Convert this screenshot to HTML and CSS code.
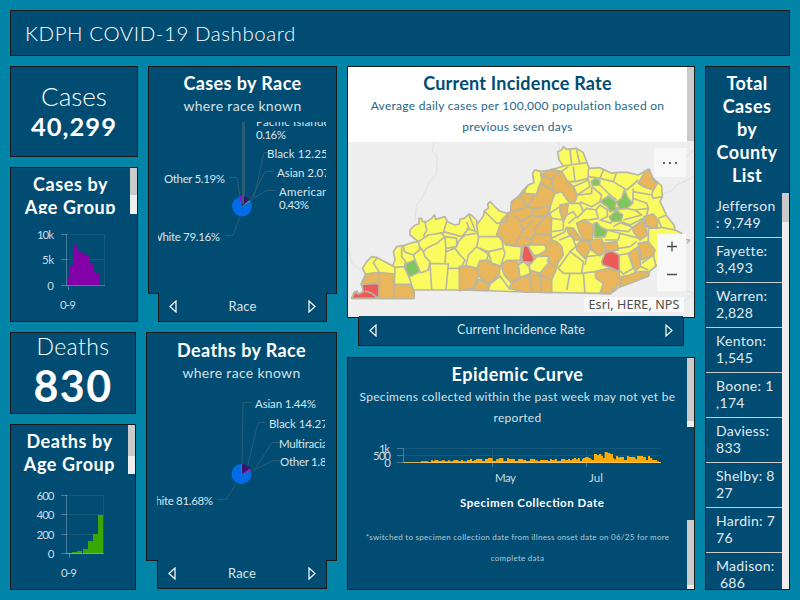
FILE: index.html
```html
<!DOCTYPE html>
<html lang="en">
<head>
<meta charset="utf-8">
<title>KDPH COVID-19 Dashboard</title>
<link rel="stylesheet" href="styles.css">
</head>
<body>
<header class="panel topbar"><h1>KDPH COVID-19 Dashboard</h1></header>
<main>
  <div class="left">
    <div class="row row-cases">
      <div class="stack stack-cases">
        <section class="panel kpi kpi-cases"><div class="kpi-label">Cases</div><div class="kpi-value">40,299</div></section>
        <section class="panel age">
          <div class="age-head short"><h2>Cases by<br>Age Group</h2><div class="bar"><i class="thumb27"></i></div></div>
          <svg class="age-chart" width="126" height="107" viewBox="11 214 126 107">
            <path class="grid" d="M67 234.500h38M67 259.500h38M104.500 234v52"/>
            <path class="bars-purple" d="M67 286v-9h3v-11h4v-21h4v7h3v2h4v2h4v7h4v9h3v2h4v12z"/>
            <path class="axis" d="M61 234.500h6M61 259.500h6M61 285.500h44M66.500 234v52M68.500 286v4"/>
            <g class="tick end"><text x="54" y="239" textLength="17">10k</text><text x="54" y="264" textLength="12">5k</text><text x="54" y="290">0</text></g>
            <text class="tick" x="60" y="309" textLength="16">0-9</text>
          </svg>
        </section>
      </div>
      <div class="race">
        <section class="panel race-main">
          <h2>Cases by Race</h2><p>where race known</p>
          <svg class="pie" width="168" height="168" viewBox="158 122 168 168">
            <path class="leader thick" d="M243.500 122v78"/>
            <path class="leader" d="M229 177.500h8l3 20M271 152.500h-7l-10 45M274 171.500h-9l-14 28M276 190.500h-10l-15 10M225 235.500h8l7-19"/>
            <circle cx="242" cy="206.500" r="10" fill="#006ce6"/>
            <path fill="#a000e6" d="M242 206l-3-9.600a10 10 0 0 1 3-.4z"/><path fill="#38146e" d="M242 206v-10a10 10 0 0 1 7.500 4z"/><path fill="#4ca820" d="M242 206.500l7.500-6.500 1 1.500z"/><path class="leader thick" d="M242.500 196v8"/>
            <g class="pietext"><text x="256" y="126" textLength="78">Pacific Islander</text><text x="256" y="139" textLength="30">0.16%</text><text x="267" y="158" textLength="70">Black 12.25%</text><text x="277" y="177" textLength="62">Asian 2.07%</text><text x="279" y="196" textLength="85">American Indian</text><text x="279" y="209" textLength="30">0.43%</text><text x="164" y="183" textLength="61">Other 5.19%</text><text x="151" y="241" textLength="69">White 79.16%</text></g>
          </svg>
        </section>
        <nav class="panel tab tab-race"><svg width="8" height="13" viewBox="0 0 8 13"><path d="M7 1v11L1 6.500z"/></svg><span>Race</span><svg width="8" height="13" viewBox="0 0 8 13"><path d="M1 1v11l6-5.500z"/></svg></nav>
      </div>
    </div>
    <div class="row row-deaths">
      <div class="stack stack-deaths">
        <section class="panel kpi kpi-deaths"><div class="kpi-label">Deaths</div><div class="kpi-value">830</div></section>
        <section class="panel age">
          <div class="age-head tall"><h2>Deaths by<br>Age Group</h2><div class="bar"><i class="thumb31"></i></div></div>
          <svg class="age-chart" width="124" height="115" viewBox="11 474 124 115">
            <path class="grid" d="M67 495.500h37M67 514.500h37M67 534.500h37M103.500 495v59"/>
            <path class="bars-green" d="M67 554v-1h5v-1h5v-1h5v3h1v-5h5v-8h5v-7h5v-19h5v39z"/>
            <path class="axis" d="M61 495.500h6M61 514.500h6M61 534.500h6M61 553.500h43M66.500 495v59M69.500 554v4"/>
            <g class="tick end"><text x="54.500" y="500" textLength="18">600</text><text x="54.500" y="519" textLength="18">400</text><text x="54.500" y="539" textLength="18">200</text><text x="54.500" y="558">0</text></g>
            <text class="tick" x="61" y="577" textLength="16">0-9</text>
          </svg>
        </section>
      </div>
      <div class="race">
        <section class="panel race-main">
          <h2>Deaths by Race</h2><p>where race known</p>
          <svg class="pie" width="168" height="170" viewBox="157 388 168 170">
            <path class="leader" d="M252 402.500h-9l-1 64M266 422.500h-8l-11 46M281 442.500h-9l-18 28M282 460.500h-9l-20 10M217 499.500h9l11-17"/>
            <circle cx="241.500" cy="474" r="10" fill="#006ce6"/>
            <path fill="#38146e" d="M242 474v-10a10 10 0 0 1 8 4.500z"/><path fill="#a52090" d="M242 474l8-5.500 1 2z"/><path stroke="#268b85" d="M241.500 464v9"/>
            <g class="pietext"><text x="255" y="408" textLength="61">Asian 1.44%</text><text x="269" y="428" textLength="68">Black 14.27%</text><text x="279" y="448" textLength="84">Multiracial 0.81%</text><text x="280" y="466" textLength="62">Other 1.80%</text><text x="144" y="505" textLength="69">White 81.68%</text></g>
          </svg>
        </section>
        <nav class="panel tab tab-race"><svg width="8" height="13" viewBox="0 0 8 13"><path d="M7 1v11L1 6.500z"/></svg><span>Race</span><svg width="8" height="13" viewBox="0 0 8 13"><path d="M1 1v11l6-5.500z"/></svg></nav>
      </div>
    </div>
  </div>
  <div class="center">
    <section class="panel mapbox">
      <div class="map-head"><div class="map-title"><h2>Current Incidence Rate</h2><p>Average daily cases per 100,000 population based on<br>previous seven days</p></div><div class="bar"><i class="thumb74"></i></div></div>
      <div class="map">
        <svg width="346" height="175" viewBox="9 6 1038 525">
          <g fill="none" stroke="#dfdfdf" stroke-width="3"><path d="M268 6l-6 25 15 20-2 50-25 30-20 45-16 20-4 48M9 320l12 50 25 20M640 6l5 25M1047 110l-52 25-12 15-35 15M1015 60l32-30M985 440l62 20M1000 500l47-40"/></g>
          <path class="y" d="M20 475L27 458 36 453 40 462 60 453 48 433 55 418 62 402 52 385 65 365 80 350 97 353 120 365 143 378 150 360 145 335 155 320 175 317 200 308 220 305 195 285 195 270 210 255 222 252 222 235 230 235 232 245 245 245 260 235 268 225 272 238 300 230 307 245 330 255 343 252 345 237 358 235 372 222 382 228 395 240 395 255 415 228 418 212 430 205 428 192 436 185 445 195 462 212 485 220 497 215 500 185 520 170 535 150 550 135 567 128 563 100 570 90 587 95 615 90 635 85 655 78 642 60 638 35 650 30 655 20 665 28 695 25 715 38 725 65 733 85 765 83 800 100 815 97 845 97 880 105 910 88 925 115 950 138 952 170 945 185 955 205 965 228 987 255 990 270 1010 280 965 350 933 378 913 395 910 408 855 430 825 440 795 462 765 460 540 456 345 450 208 450 207 475z"/>
          <path class="line" d="M1022 298L1034 300 1026 310"/>
          <g class="o"><path d="M62 402L103 398 103 430 52 432zM103 398L148 402 146 475 103 475zM148 432L195 433 205 450 207 475 146 475zM343 380L370 378 395 385 400 405 385 445 343 452zM398 380L405 362 430 360 440 370 465 378 463 402 435 430 412 418 398 405zM400 418L430 430 430 450 385 450zM468 375L485 362 518 365 525 410 500 430 478 405z"/>
          <path d="M455 285L470 240 490 220 497 215 500 185 520 170 537 155 575 165 580 145 590 130 585 105 620 88 650 95 665 120 685 140 697 165 690 185 675 190 660 170 650 155 630 160 620 185 612 215 620 235 618 280 620 300 635 305 650 320 655 345 640 365 635 385 620 420 620 458 540 456 492 445 500 430 525 415 525 370 530 320 480 312 463 292z"/></g>
          <path class="r" d="M50 433L102 430 102 472 85 475 20 475 30 455 40 462 55 455z"/>
          <path class="g" d="M185 370L210 360 225 395 192 410 180 385z"/>
          <path class="line" d="M60 453L80 460 98 472M97 353L85 368 103 398M62 402L103 398M143 378L150 382 148 432M143 378L150 382 178 380 182 365 170 350 170 322M175 317L178 335 205 345 225 328 220 305M205 345L210 360M178 380L192 410 205 450M225 320L235 335 240 350 255 365 250 390 225 400M235 290L245 270 240 245M220 305L250 285 295 278 305 245M235 335L245 325 275 310 300 290 290 280M255 370L260 450M250 390L255 370 310 372 303 450M300 290L303 330 300 370M310 385L343 385M295 275L350 290 372 265 365 245M365 265L395 275M372 225L390 270M303 290L335 295 335 320 303 325M303 335L330 325 345 345 360 360 350 380M335 320L340 305 360 285 395 280M395 255L400 290 400 300 395 320 370 345 362 380M395 320L420 335 430 345 425 360M400 290L470 290 475 325 430 335 405 325M420 215L445 240 455 250 485 245 490 220M430 335L440 370 465 378M475 325L480 340 468 375M480 315L530 320 530 360 485 362M430 450L435 432 465 408 492 445"/>
          <g transform="translate(525 0)">
            <path class="y" d="M15 150L25 135 42 128 38 100 45 90 62 95 65 120 55 145 50 163 15 160zM22 315L75 315 80 330 55 345 40 345zM28 375L50 350 85 348 85 370 60 400 30 390zM-5 375L10 365 28 380 30 400 0 415z"/>
            <path class="o" d="M120 195L145 190 140 225 130 245 120 215zM140 262L160 265 185 300 165 300 145 280zM170 250L190 240 220 255 220 280 215 300 190 300 178 275zM170 315L185 300 208 305 210 330 195 355 170 330zM208 300L245 297 258 330 240 348 215 330zM250 310L290 305 295 330 258 335zM225 395L265 385 298 395 300 430 270 460 240 460 250 430 228 415zM305 410L330 405 350 395 388 395 385 408 330 430 300 440zM325 340L355 320 362 380 345 392 335 365zM355 310L385 305 405 330 400 345 365 360zM338 262L370 240 382 285 360 300 340 275zM372 230L400 222 415 240 410 265 380 260zM355 130L375 95 388 88 398 118 412 130 400 150 370 140z"/>
            <path class="line" d="M0 165L20 200 45 165M-25 215L10 205 20 200M20 200L40 205 90 200M40 205L35 225 0 245-15 225M35 225L50 230 80 225 90 205M80 225L45 265 45 280 95 285M0 250L10 270-15 310M10 270L40 240M35 300L45 280M10 290L35 300 30 315M62 130L105 155M95 120L100 155M60 105L95 118 120 95M85 315L95 300M80 360L110 385M60 400L65 458M30 400L35 458M0 410L60 405 95 420"/>
            <path class="line" d="M150 28L155 75M170 30L180 75M128 78L150 75 200 68M125 95L145 80M160 80L165 125M140 125L165 125 205 115 205 90 208 85M160 140L205 120 210 140 172 165M205 110L240 115 250 90M240 115L280 125 290 97M280 125L320 150 355 120M240 135L270 165 290 180M215 140L245 165 240 185M175 165L215 160 215 140M180 185L215 200 240 185M340 145L338 190M340 155L395 165 400 150M395 165L400 175 427 170M338 175L380 190 385 205 345 210M385 205L380 225M310 240L365 225 345 210 320 205M305 245L330 255 370 235M415 235L440 225M415 240L425 262 465 270M385 305L385 265 430 262M280 260L300 248 338 262 325 275 285 270 262 270M262 270L300 280 295 300 255 300M300 280L360 295M295 325L330 320 350 305M95 235L130 240 130 270 95 275M95 295L135 275 140 262M80 225L120 200M145 250L170 230 160 215 140 225M150 190L180 190 190 215 170 235M190 215L200 205 228 210 235 235 205 240 190 240M228 210L240 195 262 210 262 230 240 240 275 250M115 385L150 335 190 365 185 400M118 300L155 285 168 320 150 335M115 385L130 400 150 400 190 400 195 458M150 400L140 450M185 400L225 395M195 375L200 350 240 345M298 345L325 340 340 385 310 402 298 390M365 370L400 345 408 378M362 380L385 390"/>
            <path class="g" d="M213 125L225 115 240 122 238 135 218 137zM240 185L265 168 288 185 285 200 295 208 270 215 262 200zM290 185L305 175 313 150 325 175 338 190 320 205 298 208zM268 230L290 212 308 225 303 243 275 245zM222 250L232 248 240 260 262 270 255 290 225 292z"/>
            <path class="r" d="M5 350L12 315 25 320 43 358 35 368 8 365zM245 365L255 340 275 333 298 345 298 395 270 382 248 375z"/>
          </g>
        </svg>
        <div class="map-menu"><i></i><i></i><i></i></div>
        <div class="map-zoom"><svg width="30" height="58" viewBox="0 0 30 58"><path d="M10 12.500h10M15 7.500v10M10 40.500h10"/></svg></div>
        <div class="credit">Esri, HERE, NPS</div>
      </div>
    </section>
    <nav class="panel tab tab-map"><svg width="8" height="13" viewBox="0 0 8 13"><path d="M7 1v11L1 6.500z"/></svg><span>Current Incidence Rate</span><svg width="8" height="13" viewBox="0 0 8 13"><path d="M1 1v11l6-5.500z"/></svg></nav>
    <section class="panel epi">
      <div class="epi-head"><div class="epi-title"><h2>Epidemic Curve</h2><p>Specimens collected within the past week may not yet be<br>reported</p></div><div class="bar"><i class="thumb64"></i></div></div>
      <svg class="epi-chart" width="346" height="93" viewBox="348 427 346 93">
        <path class="grid" d="M403 448.500h258M403 455.500h258M492.500 448v14M586.500 448v14"/>
        <path fill="#ffaa00" transform="translate(345 430) scale(.33333)" d="M175 99V97H228V94H250V96H258V91H264V93H268V90H280V93H290V91H300V94H309V91H315V94H325V90H340V94H348V90H354V94H366V90H375V87H381V93H387V90H393V87H412V93H420V87H429V84H443V93H453V88H462V84H475V93H486V84H492V87H510V93H519V87H534V90H543V93H555V87H570V91H578V94H585V90H609V93H615V87H621V90H630V87H636V93H648V87H660V90H669V87H675V91H681V87H687V84H693V88H699V84H705V93H711V87H714V84H721V81H731V84H737V88H741V90H747V72H756V75H762V72H769V78H774V84H779V66H788V69H796V72H804V84H808V88H813V78H819V82H825V81H837V90H846V78H852V81H871V87H876V78H894V81H903V90H909V78H915V84H922V90H936V94H942V96H948V99z"/>
        <path class="axis" d="M397 448.500h6M397 455.500h6M403.500 448v14M397 462.500h264M492.500 463v4M586.500 463v4"/>
        <g class="tick end"><text x="390" y="453" textLength="11">1k</text><text x="391" y="460" textLength="18">500</text><text x="391" y="467">0</text></g>
        <g class="tick"><text x="495" y="482" textLength="21">May</text><text x="589" y="482" textLength="14">Jul</text></g>
        <text class="axis-title" x="460" y="507" textLength="144">Specimen Collection Date</text>
      </svg>
      <div class="epi-foot"><p>*switched to specimen collection date from illness onset date on 06/25 for more<br>complete data</p><div class="bar"><i class="thumb65"></i></div></div>
    </section>
  </div>
  <aside class="panel counties">
    <h2>Total<br>Cases<br>by<br>County<br>List</h2>
    <div class="county-body">
      <ul><li>Jefferson<br>: 9,749</li><li>Fayette:<br>3,493</li><li>Warren:<br>2,828</li><li>Kenton:<br>1,545</li><li>Boone: 1<br>,174</li><li>Daviess:<br>833</li><li>Shelby: 8<br>27</li><li>Hardin: 7<br>76</li><li>Madison:<br>&nbsp;686</li></ul>
      <div class="bar"><i class="thumb29"></i></div>
    </div>
  </aside>
</main>
</body>
</html>
```
FILE: styles.css
```css
* { box-sizing: border-box; }
body {
  margin: 0;
  width: 800px;
  height: 600px;
  padding: 10px;
  overflow: hidden;
  background: #0084a8;
  color: #fff;
  font-family: Lato, "Open Sans", sans-serif;
}
h1, h2, p, ul { margin: 0; padding: 0; font-weight: 400; }
svg { display: block; }
.panel { background: #004c73; border: 1px solid #1a1a1a; overflow: hidden; }
.topbar { height: 46px; padding-left: 14px; }
h1 { font-size: 20.500px; line-height: 45px; font-weight: 300; letter-spacing: .55px; }
h2 { font-size: 18px; line-height: 23px; font-weight: 700; letter-spacing: .4px; text-align: center; white-space: nowrap; }
p { text-align: center; white-space: nowrap; color: #d4e1e8; }
main { display: flex; gap: 10px; margin-top: 10px; height: 524px; }
.left { width: 327px; display: flex; flex-direction: column; gap: 10px; }
.row { display: flex; gap: 10px; }
.row-cases { height: 256px; }
.row-deaths { height: 258px; }
.stack { display: flex; flex-direction: column; gap: 10px; }
.stack-cases { width: 128px; }
.stack-deaths { width: 126px; }
.kpi { text-align: center; white-space: nowrap; }
.kpi-cases { height: 91px; padding-top: 14px; }
.kpi-deaths { height: 82px; }
.kpi-label { font-weight: 300; font-size: 26px; line-height: 31px; }
.kpi-cases .kpi-value { font-weight: 700; font-size: 25.500px; line-height: 28px; letter-spacing: 1px; }
.kpi-deaths .kpi-label { font-size: 23px; line-height: 27px; letter-spacing: .4px; }
.kpi-deaths .kpi-value { font-weight: 700; font-size: 43px; line-height: 52px; letter-spacing: 1.400px; }
.age { flex: 1; }
.age-head { display: flex; overflow: hidden; }
.age-head h2 { flex: 1; padding-top: 5px; letter-spacing: .6px; }
.short { height: 46px; }
.tall { height: 49px; }
.bar { width: 7px; flex: none; background: #eee; }
.bar i { display: block; background: #cbcbcb; }
.thumb27 { height: 27px; }
.thumb31 { height: 31px; }
.thumb74 { height: 74px; }
.thumb64 { height: 63px; }
.thumb65 { height: 65px; }
.thumb29 { height: 29px; }
.grid { fill: none; stroke: #17597b; }
.axis { fill: none; stroke: #fff; stroke-opacity: .28; }
.bars-purple { fill: #8400a8; }
.bars-green { fill: #38a800; }
.tick { font-size: 11.500px; fill: #ccdbe3; }
.end { text-anchor: end; }
.race { flex: 1; display: flex; flex-direction: column; }
.race-main { height: 228px; padding-top: 5px; }
.row-deaths .race-main { height: 229px; padding-top: 6px; }
.race p { font-size: 14px; line-height: 21px; letter-spacing: .32px; }
.pie { margin: 6px 0 0 9px; }
.row-deaths .pie { margin-left: 10px; margin-top: 5px; }
.pietext { font-size: 11.500px; fill: #d9e4ea; }
.leader { fill: none; stroke: #2d5c75; }
.thick { stroke-width: 3; }
.tab { border-top: 0; display: flex; align-items: center; justify-content: space-between; padding: 0 10px 1px; color: #d9e4ea; position: relative; overflow: visible; }
.tab span { padding-bottom: 2px; }
.tab::before { content: ""; position: absolute; left: 0; right: 0; top: -1px; height: 1px; background: #004c73; }
.tab path { fill: none; stroke: #fff; stroke-width: 1.2; }
.tab-race { height: 29px; margin: -1px 10px 0; font-size: 13px; letter-spacing: .1px; }
.row-deaths .tab-race { margin-left: 11px; }
.tab-map { flex: none; height: 29px; margin: -1px 11px 0; font-size: 12.500px; letter-spacing: .1px; }
.center { width: 348px; display: flex; flex-direction: column; }
.mapbox { height: 252px; flex: none; background: #fff; }
.map-head { display: flex; height: 75px; }
.map-title, .epi-title { flex: 1; padding-top: 5px; }
.map-title h2 { letter-spacing: .23px; }
.map-title, .map-title p { color: #004c73; }
.map-title p { color: #24658a; font-size: 12px; line-height: 21px; letter-spacing: .28px; }
.map { position: relative; height: 175px; background: #eee; }
.map path { stroke-linejoin: round; }
.y, .o, .g, .r, .line { stroke: #b9b7a2; stroke-width: 5; }
.y { fill: #f9fb5e; }
.o { fill: #e9b65b; }
.g { fill: #7fc55e; }
.r { fill: #ec5a5a; }
.line { fill: none; }
.map-menu { position: absolute; left: 306px; top: 6px; width: 32px; height: 29px; background: #f8f8f8; display: flex; gap: 4px; justify-content: center; align-items: center; }
.map-menu i { width: 2px; height: 2px; background: #666; }
.map-zoom { position: absolute; left: 309px; top: 92px; width: 29px; height: 57px; background: #f8f8f8; }
.map-zoom path { fill: none; stroke: #4c4c4c; stroke-width: 1.300; }
.credit { position: absolute; left: 236px; top: 155px; width: 100px; height: 15px; background: rgba(255,255,255,.7); color: #4c4c4c; font: 12.500px/15px "Noto Sans", sans-serif; letter-spacing: .1px; text-align: center; white-space: nowrap; }
.epi { height: 233px; flex: none; margin-top: 11px; }
.epi-head { display: flex; height: 69px; }
.epi-title p { font-size: 12px; line-height: 21px; letter-spacing: .29px; }
.epi-title h2 { letter-spacing: .5px; }
.axis-title { font-size: 11.500px; font-weight: 700; fill: #fff; }
.epi-foot { display: flex; height: 69px; }
.epi-foot p { flex: 1; font-size: 8px; line-height: 21px; padding-top: 7px; letter-spacing: .28px; color: #b2c9d5; }
.counties { width: 85px; display: flex; flex-direction: column; }
.counties h2 { padding-top: 5px; height: 126px; flex: none; padding-right: 1px; }
.county-body { flex: 1; display: flex; overflow: hidden; }
.county-body ul { flex: 1; list-style: none; }
.county-body li { height: 45px; border-bottom: 1px solid #ccc; padding: 5px 0 0 10px; font-size: 14px; line-height: 16.500px; letter-spacing: .3px; color: #e1eaef; white-space: nowrap; }
```
